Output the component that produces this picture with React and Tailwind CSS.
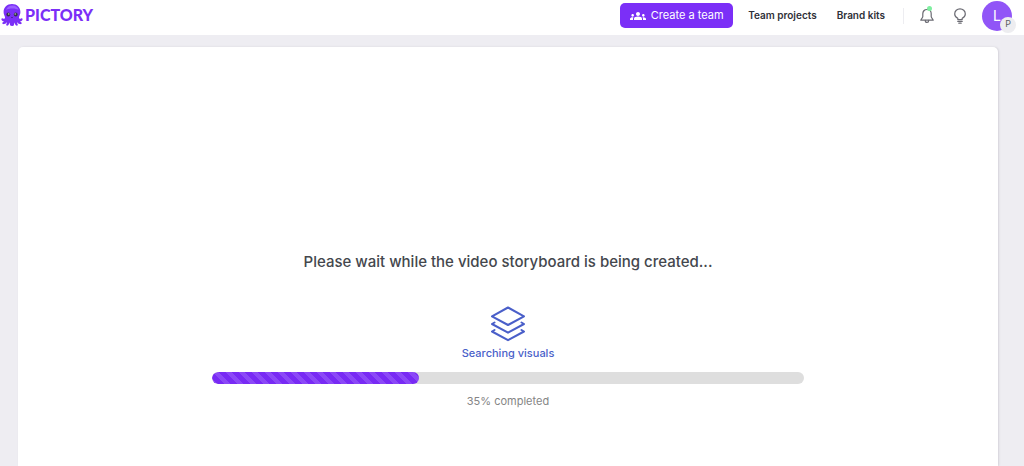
import { MdGroups } from 'react-icons/md'

const NAV_LINKS = [
  { label: 'Team projects', href: '#team-projects' },
  { label: 'Brand kits', href: '#brand-kits' }
]

const OctopusIcon = () => (
  <svg viewBox="0 0 22 24" className="h-6 w-[22px]" aria-hidden="true">
    <path
      fill="#7b2ff7"
      d="M11 1C6 1 2.600 4.300 2.600 8.900c0 2 .8 3.400 1.300 4.800C4.300 15 3.700 15.800 2.800 15.800c-.8 0-1.200-.6-1.700-.5-.7.1-.9 1-.5 1.700.4.800 1.300 1.300 2.300 1.400-.5.8-1.700.9-1.700 1.700 0 .8 1 1.300 2 1 1.200-.3 2-1.100 2.800-1.900-.1 1.300-1 2-.8 2.900.2.700 1.300.8 2 .2.800-.700 1-1.700 1.300-2.700.5 1 .2 2.200.8 3 .4.600 3 .6 3.400 0 .6-.8.300-2 .8-3 .3 1 .5 2 1.300 2.700.7.600 1.800.5 2-.2.200-.9-.7-1.600-.8-2.900.8.800 1.600 1.600 2.800 1.900 1 .3 2-.2 2-1s-1.200-.9-1.700-1.700c1-.1 1.900-.6 2.300-1.400.4-.7.200-1.600-.5-1.700-.5-.1-.9.5-1.700.5-.9 0-1.500-.8-1.100-2.100.5-1.400 1.300-2.800 1.300-4.800C19.400 4.300 16 1 11 1z"
    />
    <path fill="#9a60ff" d="M5 7C6 4 8.500 2.600 11.500 2.600c3 0 5.500 1.700 6 4.400C15 5 8 5 5 7z" />
    <circle cx="7.300" cy="11.500" r="1.900" fill="#35314f" />
    <circle cx="14.700" cy="11.500" r="1.900" fill="#35314f" />
    <circle cx="7.800" cy="11" r=".7" fill="#cfe5b8" />
    <circle cx="14.200" cy="11" r=".7" fill="#cfe5b8" />
    <path d="M10 14.300q1 .9 2 0" fill="none" stroke="#3c1a8a" strokeWidth=".7" />
  </svg>
)

const BellIcon = () => (
  <svg viewBox="0 0 14 16" className="h-4 w-3.5" fill="none" stroke="#6b6b73" strokeWidth="1.200" strokeLinejoin="round" strokeLinecap="round" aria-hidden="true">
    <path d="M7 1.500c-2.500 0-4.200 1.900-4.200 4.300v2.700C2.800 10 .8 11 .8 12.200h12.400c0-1.200-2-2.200-2-3.700V5.800C11.200 3.400 9.500 1.500 7 1.500z" />
    <path d="M5.300 12.400c0 1.200.7 2 1.700 2s1.700-.8 1.700-2" />
  </svg>
)

const BulbIcon = () => (
  <svg viewBox="0 0 12 16" className="h-4 w-3" fill="none" stroke="#6b6b73" strokeWidth="1.200" strokeLinejoin="round" strokeLinecap="round" aria-hidden="true">
    <path d="M3.800 11.600V10.200C2 9.300.7 7.900.7 5.900.7 3 3.100.8 6 .8s5.300 2.200 5.300 5.100c0 2-1.300 3.400-3.100 4.300v1.400z" />
    <path d="M3.800 13.400h4.400M4.800 15.200h2.400" />
  </svg>
)

const LayersIcon = () => (
  <svg viewBox="0 0 36 36" className="size-9" fill="none" stroke="#4a5fc9" strokeWidth="2" strokeLinejoin="round" strokeLinecap="round" aria-hidden="true">
    <path d="M18 1.500 34 10.300 18 19 2 10.300z" />
    <path d="M4.500 16.500 2 18 18 26.700 34 18l-2.500-1.500" />
    <path d="M4.500 24 2 25.500 18 34.200 34 25.500 31.500 24" />
  </svg>
)

const Header = () => (
  <header className="flex h-[35px] items-start bg-white pr-3">
    <a href="#home" className="flex items-center gap-0.5 pt-[3px] pl-px" aria-label="Pictory">
      <OctopusIcon />
      <span className="font-[Lato,sans-serif] text-base leading-6 font-black text-[#7b2ff7]">PICTORY</span>
    </a>

    <nav className="ml-auto flex h-[31px] items-center text-[10px] font-semibold text-[#2f3038]">
      <button type="button" className="flex h-[25px] w-[113px] items-center justify-center gap-[5px] rounded-[5px] bg-[#7b2ff7] text-[11px] font-normal text-white">
        <MdGroups className="size-4" />
        Create a team
      </button>
      {NAV_LINKS.map((link, index) => (
        <a key={link.href} href={link.href} className={index === 0 ? 'ml-[15px]' : 'ml-5'}>
          {link.label}
        </a>
      ))}
      <span className="ml-[18px] h-4 w-px bg-[#ededf1]" />
      <button type="button" className="relative ml-4" aria-label="Notifications">
        <BellIcon />
        <span className="absolute -top-0.5 right-0.5 size-[5px] rounded-full bg-[#7fefa0]" />
      </button>
      <button type="button" className="ml-5" aria-label="Tips">
        <BulbIcon />
      </button>
      <button type="button" className="relative ml-4 size-[30px] rounded-full bg-[#9155f7] text-sm font-normal text-white" aria-label="Account">
        L
        <span className="absolute -right-1 -bottom-0.5 flex size-4 items-center justify-center rounded-full bg-[#ededf0] text-[9px] text-[#5c5c64]">
          P
        </span>
      </button>
    </nav>
  </header>
)

const ProgressBar = ({ value }) => (
  <div
    role="progressbar"
    aria-label="Searching visuals"
    aria-valuenow={value}
    aria-valuemin={0}
    aria-valuemax={100}
    className="h-3 w-full overflow-hidden rounded-full bg-[#dedede]"
  >
    <div
      className="h-full rounded-full bg-[#782af4] bg-[linear-gradient(45deg,#8b48f7_25%,transparent_25%,transparent_50%,#8b48f7_50%,#8b48f7_75%,transparent_75%)] bg-size-[13px_13px]"
      style={{ width: `${value}%` }}
    />
  </div>
)

const App = () => {
  const progress = 35

  return (
    <div className="flex min-h-screen flex-col bg-[#eeedf2] font-[Inter,sans-serif]">
      <Header />

      <main className="mt-3 mr-[26px] ml-[18px] flex flex-1 flex-col items-center rounded-t-[5px] bg-white px-4 pt-[203px] pb-14 shadow-[1px_0_2px_#d4d3da]">
        <h1 className="text-[15px] leading-6 font-medium text-[#44474d]">
          Please wait while the video storyboard is being created...
        </h1>

        <div className="mt-8 flex w-full max-w-[592px] flex-col items-center">
          <LayersIcon />
          <p className="mt-[3px] text-[11px] leading-4 font-medium text-[#4a5fc9]">Searching visuals</p>
          <div className="mt-[11px] w-full">
            <ProgressBar value={progress} />
          </div>
          <p className="mt-[9px] text-[11px] leading-4 font-normal text-[#858585]">{progress}% completed</p>
        </div>
      </main>
    </div>
  )
}

export default App
